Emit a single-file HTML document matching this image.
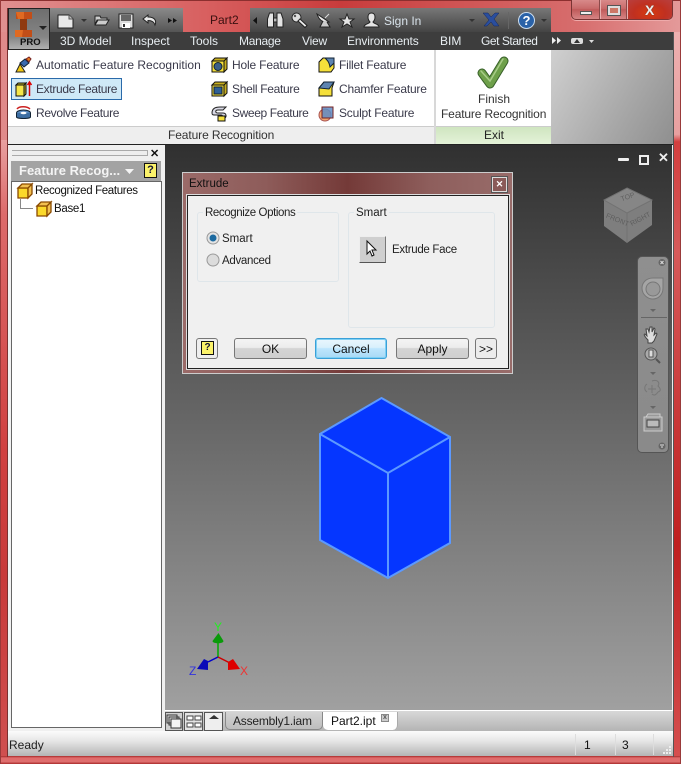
<!DOCTYPE html>
<html><head><meta charset="utf-8"><style>
html,body{margin:0;padding:0}
body{width:681px;height:764px;position:relative;overflow:hidden;font:12px "Liberation Sans",sans-serif;color:#222;background:#c33}
.a{position:absolute}
.t{position:absolute;white-space:nowrap;line-height:16px;height:16px}
.m{color:#e8eef2;top:33px}
.r{color:#3a3a4a}
.d{font-size:11.500px;color:#222}
.btn{position:absolute;top:338px;height:19px;border:1px solid #777;border-radius:3px;background:linear-gradient(#f4f4f4 0,#ececec 45%,#d4d4d4 50%,#cfcfcf 100%);text-align:center;line-height:21px;color:#111}
svg{position:absolute;overflow:visible}
</style></head><body>
<!-- frame -->
<div class="a" style="left:0;top:0;width:681px;height:764px;background:linear-gradient(90deg,#e08a8a 0,#d96a6a 100%)"></div>
<div class="a" style="left:0;top:0;width:681px;height:32px;background:linear-gradient(90deg,#e09090 0,#d86060 30%,#c83c3c 50%,#d76d6d 85%,#e49a9a 100%)"></div>
<div class="a" style="left:0;top:0;width:681px;height:1px;background:#8c2f2f"></div>
<div class="a" style="left:0;top:140px;width:7px;height:624px;background:linear-gradient(#e8a0a0 0,#dc6a6a 12%,#d04040 50%,#c83a3a 70%,#d05050 100%)"></div>
<div class="a" style="left:674px;top:32px;width:7px;height:732px;background:linear-gradient(#eeb0b0 0,#e8a0a0 14%,#d33f3f 15%,#d65a5a 30%,#c02020 70%,#d65050 100%)"></div>
<div class="a" style="left:0;top:756px;width:681px;height:8px;background:linear-gradient(#a82a2a 0,#e06a6a 25%,#e07070 70%,#a82a2a 100%)"></div>
<div class="a" style="left:0;top:0;width:1px;height:764px;background:#9a3a3a"></div>
<div class="a" style="left:680px;top:0;width:1px;height:764px;background:#9a3a3a"></div>
<div class="a" style="left:7px;top:8px;width:1px;height:749px;background:#7a3030"></div>
<div class="a" style="left:673px;top:32px;width:1px;height:725px;background:#555"></div>
<!-- title bar toolbars -->
<div class="a" style="left:49px;top:8px;width:134px;height:24px;background:linear-gradient(#8a8a8a,#555)"></div>
<div class="a" style="left:250px;top:8px;width:301px;height:24px;background:linear-gradient(#777,#444)"></div>
<div class="t" style="left:210px;top:12px;color:#3a1010">Part2</div>
<!-- menubar -->
<div class="a" style="left:8px;top:32px;width:665px;height:18px;background:#3d3d3d"></div>
<!-- QAT icons -->
<svg style="left:57px;top:13px" width="18" height="16"><path d="M1 2h11l4 4v9H1z" fill="#e8e8e8" stroke="#222"/><path d="M12 2v4h4" fill="#bbb" stroke="#555"/></svg>
<svg style="left:81px;top:19px" width="6" height="4"><path d="M0 0h6L3 3z" fill="#333"/></svg>
<svg style="left:94px;top:14px" width="16" height="12"><path d="M1 11V2h5l1 2h6v2H4L1 11l2-5h12l-3 5z" fill="#ccc" stroke="#222"/></svg>
<svg style="left:118px;top:13px" width="16" height="16"><path d="M1 1h14v14H1z" fill="#ddd" stroke="#222"/><path d="M3 2h10v6H3z" fill="#666"/><path d="M4 10h8v5H4z" fill="#fff"/><path d="M5 11h2v3H5z" fill="#333"/></svg>
<svg style="left:142px;top:14px" width="16" height="12"><path d="M6 1L1 5l5 4V6.500c3 0 6 1 7 4.500 2-5-1-8-7-8z" fill="#e8e8e8" stroke="#222"/></svg>
<svg style="left:168px;top:18px" width="9" height="5"><path d="M0 0l4 2.500L0 5zM5 0l4 2.500L5 5z" fill="#111"/></svg>
<!-- right toolbar icons -->
<svg style="left:253px;top:17px" width="4" height="7"><path d="M4 0v7L0 3.500z" fill="#111"/></svg>
<svg style="left:267px;top:12px" width="17" height="16"><path d="M2.500 1h4v14H0.500V7zM10 1h4l2 6v8h-6z" fill="#e4e4e4" stroke="#222"/><path d="M6.500 6h3.500v4H6.500z" fill="#bbb" stroke="#222"/></svg>
<svg style="left:291px;top:12px" width="17" height="16"><circle cx="5.500" cy="5.500" r="4.500" fill="#ddd" stroke="#222"/><circle cx="4" cy="4" r="1.200" fill="#555"/><path d="M9 7l7 6.500-2 2-7-6.500z" fill="#eee" stroke="#222"/></svg>
<svg style="left:316px;top:12px" width="17" height="16"><path d="M1 2c2 6 6 9 12 8z" fill="#e8e8e8" stroke="#222"/><path d="M7 9l-3 6h10l-3-5" fill="#ccc" stroke="#222"/><path d="M9 6l4-4" stroke="#ddd"/></svg>
<svg style="left:339px;top:13px" width="16" height="15"><path d="M8 1l2 5h5l-4 3 2 5-5-3-5 3 2-5-4-3h5z" fill="#e4e4e4" stroke="#222"/></svg>
<svg style="left:363px;top:12px" width="17" height="16"><path d="M8.500 1c2.500 0 3.500 2 3.500 4s-1 4-2 5c1 2 6 2 6 5H1c0-3 5-3 6-5-1-1-2-3-2-5s1-4 3.500-4z" fill="#e4e4e4" stroke="#222"/></svg>
<div class="t" style="left:384px;top:13px;color:#d8e2ea">Sign In</div>
<svg style="left:469px;top:19px" width="6" height="4"><path d="M0 0h6L3 3z" fill="#333"/></svg>
<svg style="left:483px;top:12px" width="17" height="15"><path d="M0 1h5l3 4 4-4h4l-5 6 5 7h-5L8 10l-4 4H1l5-6z" fill="#2a4e9e" stroke="#14255a" stroke-width=".5"/></svg>
<div class="a" style="left:508px;top:12px;width:1px;height:17px;background:#666"></div>
<div class="a" style="left:518px;top:12px;width:15px;height:15px;border-radius:50%;background:#2a62a8;border:1px solid #cde;color:#fff;font:bold 13px/15px 'Liberation Sans',sans-serif;text-align:center">?</div>
<svg style="left:541px;top:19px" width="6" height="4"><path d="M0 0h6L3 3z" fill="#333"/></svg>
<!-- window controls -->
<div class="a" style="left:571px;top:0;width:102px;height:20px;border:1px solid #7a3434;border-top:0;border-radius:0 0 5px 5px;box-sizing:border-box;background:linear-gradient(#d88a8a 0,#c86a6a 45%,#c05a5a 50%,#d68484 100%);box-shadow:0 1px 0 #eaa"></div>
<div class="a" style="left:627px;top:0;width:45px;height:19px;border-radius:0 0 4px 0;background:radial-gradient(ellipse at 50% 70%,#d83a10 0,#c03020 50%,#b84040 100%)"></div>
<div class="a" style="left:599px;top:0;width:1px;height:19px;background:#8a4a4a;box-shadow:1px 0 0 #e8b0b0"></div>
<div class="a" style="left:626px;top:0;width:1px;height:19px;background:#8a4a4a;box-shadow:1px 0 0 #e8b0b0"></div>
<div class="a" style="left:580px;top:11px;width:10px;height:2px;background:#eee;border:1px solid #555"></div>
<div class="a" style="left:608px;top:6px;width:8px;height:5px;border:2px solid #ddd;outline:1px solid #555;background:#c76"></div>
<div class="t" style="left:645px;top:2px;color:#eee;font:bold 14px/16px 'Liberation Sans',sans-serif;text-shadow:0 0 1px #333">X</div>
<!-- app button -->
<div class="a" style="left:8px;top:8px;width:40px;height:40px;border:1px solid #222;background:linear-gradient(#6e6e6e 0,#858585 70%,#b0b0b0 100%)"></div>
<svg style="left:15px;top:12px" width="18" height="26"><path d="M1 0h16v7h-5v11h5v7H0v-7h5V7H1z" fill="#c24e18"/><path d="M5 7h7v11H5z" fill="#8f3a10"/><path d="M1 0h8v7H3zM0 18h8l-1 7H0z" fill="#e06a22"/></svg>
<svg style="left:39px;top:26px" width="8" height="5"><path d="M0 0h8L4 4z" fill="#222"/></svg>
<div class="t" style="left:20px;top:36px;font:bold 9.500px/13px 'Liberation Sans',sans-serif;color:#111">PRO</div>
<!-- menu text -->
<div class="t m" style="left:60px">3D Model</div>
<div class="t m" style="left:131px">Inspect</div>
<div class="t m" style="left:190px">Tools</div>
<div class="t m" style="left:239px;letter-spacing:-.3px">Manage</div>
<div class="t m" style="left:302px;letter-spacing:-.2px">View</div>
<div class="t m" style="left:347px;letter-spacing:-.15px">Environments</div>
<div class="t m" style="left:440px">BIM</div>
<div class="t m" style="left:481px;letter-spacing:-.45px">Get Started</div>
<svg style="left:552px;top:37px" width="9" height="7"><path d="M0 0l4 3.500L0 7zM5 0l4 3.500L5 7z" fill="#eee"/></svg>
<div class="a" style="left:571px;top:38px;width:12px;height:6px;border-radius:2px;background:#ddd"></div>
<svg style="left:574px;top:39px" width="6" height="4"><path d="M0 4h6L3 0z" fill="#333"/></svg>
<svg style="left:589px;top:40px" width="5" height="3"><path d="M0 0h5L2.500 3z" fill="#ddd"/></svg>
<!-- ribbon -->
<div class="a" style="left:8px;top:50px;width:426px;height:76px;background:#fff"></div>
<div class="a" style="left:8px;top:126px;width:426px;height:1px;background:#ccc"></div>
<div class="a" style="left:8px;top:127px;width:426px;height:17px;background:#eee"></div>
<div class="a" style="left:434px;top:50px;width:2px;height:94px;background:#d8d8d8"></div>
<div class="a" style="left:436px;top:50px;width:115px;height:76px;background:#fff"></div>
<div class="a" style="left:436px;top:126px;width:115px;height:18px;background:linear-gradient(#cfe5c0,#e4f2d8);border-top:1px solid #ccc;box-sizing:border-box"></div>
<div class="a" style="left:551px;top:50px;width:122px;height:94px;background:linear-gradient(120deg,#d0d0d0 0,#a8a8a8 60%,#8f8f8f 100%)"></div>
<div class="a" style="left:11px;top:78px;width:109px;height:20px;background:#cfe9f7;border:1px solid #2a6aaa"></div>
<div class="t r" style="left:36px;top:57px">Automatic Feature Recognition</div>
<div class="t r" style="left:36px;top:81px;letter-spacing:-.33px">Extrude Feature</div>
<div class="t r" style="left:36px;top:105px;letter-spacing:-.33px">Revolve Feature</div>
<div class="t r" style="left:232px;top:57px;letter-spacing:-.17px">Hole Feature</div>
<div class="t r" style="left:232px;top:81px;letter-spacing:-.3px">Shell Feature</div>
<div class="t r" style="left:232px;top:105px;letter-spacing:-.38px">Sweep Feature</div>
<div class="t r" style="left:339px;top:57px;letter-spacing:-.2px">Fillet Feature</div>
<div class="t r" style="left:339px;top:81px;letter-spacing:-.2px">Chamfer Feature</div>
<div class="t r" style="left:339px;top:105px;letter-spacing:-.2px">Sculpt Feature</div>
<div class="t" style="left:168px;top:127px;color:#333;letter-spacing:-.1px">Feature Recognition</div>
<div class="t" style="left:484px;top:127px;color:#222">Exit</div>
<div class="t" style="left:478px;top:91px;color:#333">Finish</div>
<div class="t" style="left:441px;top:106px;color:#333;letter-spacing:-.15px">Feature Recognition</div>
<!-- ribbon icons -->
<svg style="left:15px;top:56px" width="17" height="17"><path d="M1 16l4-8 5 8z" fill="#f2c811" stroke="#222"/><path d="M5 7l5-4 4 4-5 4z" fill="#3a6ab0" stroke="#123"/><path d="M11 3l3-2 2 2-2 3z" fill="#e87b1e" stroke="#722"/></svg>
<svg style="left:15px;top:80px" width="17" height="17"><path d="M1 5h8v11H1z" fill="#f6e64a" stroke="#111"/><path d="M1 5l2-2h8L9 5zM9 5l2-2v11l-2 2z" fill="#c0b020" stroke="#111"/><path d="M14.500 16V3M12.500 5l2-3 2 3" stroke="#d00" fill="none" stroke-width="1.500"/></svg>
<svg style="left:15px;top:104px" width="17" height="17"><path d="M2 5c2-3 10-3 13 0" stroke="#c22" fill="none" stroke-width="1.500"/><ellipse cx="8.500" cy="9" rx="7" ry="3" fill="#5b8bc0" stroke="#123"/><path d="M1.500 9v4c0 2 14 2 14 0V9" fill="#3d6ea3" stroke="#123"/><ellipse cx="8.500" cy="9" rx="3" ry="1.200" fill="#fff"/></svg>
<svg style="left:211px;top:57px" width="17" height="16"><path d="M1 4h12v11H1z" fill="#f5e03a" stroke="#111"/><path d="M1 4l3-3h12l-3 3zM13 4l3-3v11l-3 3z" fill="#c9b020" stroke="#111"/><circle cx="7" cy="9.500" r="4" fill="#3b5f88" stroke="#123"/></svg>
<svg style="left:211px;top:81px" width="17" height="16"><path d="M1 4h12v11H1z" fill="#f5e03a" stroke="#111"/><path d="M1 4l3-3h12l-3 3zM13 4l3-3v11l-3 3z" fill="#c9b020" stroke="#111"/><path d="M3 6h8v7H3z" fill="#2e5f96" stroke="#123"/></svg>
<svg style="left:211px;top:105px" width="19" height="17"><path d="M1 8c0-5 4-6 8-6h6l-3 3H7c-3 0-3 3 0 3h5c3 0 4 3 2 5l-3-2c1 0 0-1-1-1H5C2 10 1 10 1 8z" fill="#d8d8e4" stroke="#222"/><path d="M7 11h7v5H7z" fill="#f5e03a" stroke="#111"/></svg>
<svg style="left:318px;top:57px" width="17" height="16"><path d="M1 5l4-4h11v10l-3 4H1z" fill="#f5e03a" stroke="#111"/><path d="M7 1h9v5l-4 4c-1-5-2-6-5-9z" fill="#5d84b0" stroke="#123"/></svg>
<svg style="left:318px;top:81px" width="17" height="16"><path d="M1 7l5-6h10l-2 6v8H1z" fill="#f5e03a" stroke="#111"/><path d="M1 7l5-6h10l-5 7z" fill="#5d84b0" stroke="#123"/></svg>
<svg style="left:318px;top:105px" width="17" height="17"><circle cx="7" cy="10" r="6" fill="#f0a870" stroke="#a55"/><path d="M4 2h11v11H4z" fill="#5f8cc4" fill-opacity=".85" stroke="#722"/></svg>
<svg style="left:474px;top:54px" width="36" height="36"><path d="M8 19l8 11L30 7" fill="none" stroke="#38602a" stroke-width="9" stroke-linecap="round" stroke-linejoin="round"/><path d="M8 19l8 11L30 7" fill="none" stroke="#6ea04a" stroke-width="7" stroke-linecap="round" stroke-linejoin="round"/><path d="M7 17l9 10L29 5" fill="none" stroke="#a8cc88" stroke-width="1.500" stroke-linecap="round"/></svg>
<!-- dark bg -->
<div class="a" style="left:8px;top:144px;width:665px;height:587px;background:#222"></div>
<!-- browser -->
<div class="a" style="left:8px;top:145px;width:157px;height:586px;background:#f0f0f0"></div>
<div class="a" style="left:12px;top:150px;width:135px;height:4px;border:1px solid #aaa;border-width:1px 1px 1px 0;background:#eee"></div>
<div class="t" style="left:150px;top:146px;font:bold 11px/16px 'Liberation Sans',sans-serif;color:#111">✕</div>
<div class="a" style="left:11px;top:161px;width:150px;height:20px;background:#a3a3a3"></div>
<div class="t" style="left:19px;top:163px;font:bold 13px/16px 'Liberation Sans',sans-serif;color:#f4f4f4">Feature Recog...</div>
<svg style="left:125px;top:169px" width="9" height="5"><path d="M0 0h9L4.500 5z" fill="#f4f4f4"/></svg>
<div class="a" style="left:144px;top:163px;width:11px;height:13px;background:#fbf26a;border:1px solid #111;font:bold 11px/13px 'Liberation Sans',sans-serif;text-align:center;color:#113">?</div>
<div class="a" style="left:11px;top:181px;width:149px;height:545px;background:#fff;border:1px solid #666"></div>
<svg style="left:17px;top:183px" width="16" height="16"><path d="M1 5h10v10H1z" fill="#fbd92a" stroke="#8a4a00" stroke-width="1.300"/><path d="M1 5l4-4h10l-4 4zM11 5l4-4v10l-4 4z" fill="#f2c050" stroke="#8a4a00" stroke-width="1.300"/></svg>
<svg style="left:36px;top:201px" width="16" height="16"><path d="M1 5h10v10H1z" fill="#fbd92a" stroke="#8a4a00" stroke-width="1.300"/><path d="M1 5l4-4h10l-4 4zM11 5l4-4v10l-4 4z" fill="#f2c050" stroke="#8a4a00" stroke-width="1.300"/></svg>
<svg style="left:19px;top:199px" width="16" height="11"><path d="M1.500 0v9.500H14" fill="none" stroke="#888"/></svg>
<div class="t" style="left:35px;top:183px;color:#111;font-size:11.500px;letter-spacing:-.35px">Recognized Features</div>
<div class="t" style="left:54px;top:201px;color:#111;font-size:11.500px;letter-spacing:-.3px">Base1</div>
<!-- canvas -->
<div class="a" style="left:165px;top:145px;width:507px;height:565px;background:linear-gradient(#303030 0,#a0a0a0 100%)"></div>
<div class="a" style="left:672px;top:145px;width:1px;height:566px;background:#eee"></div>
<!-- canvas controls -->
<div class="a" style="left:618px;top:158px;width:11px;height:3px;background:#eee;border-radius:1px"></div>
<div class="a" style="left:639px;top:155px;width:6px;height:6px;border:2px solid #eee"></div>
<div class="t" style="left:658px;top:150px;font:bold 13px/16px 'Liberation Sans',sans-serif;color:#eee">✕</div>
<!-- view cube -->
<svg style="left:602px;top:188px" width="52" height="56"><path d="M25 0L50 12 50 37 25 55 2 38 2 12z" fill="#7e7e7e"/><path d="M25 0L50 12 25 25 2 12z" fill="#868686" stroke="#727272"/><path d="M25 25v30" stroke="#727272"/></svg>
<div class="t" style="left:605px;top:216px;font-size:7px;line-height:10px;height:10px;color:#5e5e5e;transform:rotate(22deg)">FRONT</div>
<div class="t" style="left:630px;top:215px;font-size:7px;line-height:10px;height:10px;color:#5e5e5e;transform:rotate(-28deg)">RIGHT</div>
<div class="t" style="left:621px;top:193px;font-size:7px;line-height:10px;height:10px;color:#606060;transform:rotate(-20deg)">TOP</div>
<!-- nav bar -->
<div class="a" style="left:637px;top:256px;width:32px;height:197px;border-radius:5px;background:linear-gradient(#8f8f8f,#8a8a8a);border:1px solid #555;box-sizing:border-box"></div>
<svg style="left:641px;top:261px" width="26" height="188" fill="none"><circle cx="21" cy="1.500" r="3.500" fill="#666"/><path d="M19.500 0l3 3M22.500 0l-3 3" stroke="#ddd"/><path d="M1 27c0-5 4-10 11-10h10v10c0 7-5 11-10 11S1 34 1 27z" fill="#a5a5a5" stroke="#777"/><circle cx="12" cy="28" r="7" stroke="#777" fill="#999"/><path d="M9 48h6l-3 3z" fill="#666"/><path d="M0 56.500h26" stroke="#666"/><path d="M7 79c-3-3-5-6-3-6l2 2-1-7 2 0 1 3 1-5 2 0 0 5 2-4 1 1-1 6 2-2 1 1-3 7-2 2H7z" fill="#ddd" stroke="#444"/><circle cx="10" cy="93" r="6" fill="#aaa" stroke="#555"/><path d="M8 89h4v7H8z" fill="#ddd" stroke="#555"/><path d="M15 98l4 4" stroke="#555" stroke-width="2"/><path d="M9 111h6l-3 3z" fill="#666"/><path d="M6 123c-3 2-3 6 0 8M11 120c6-2 8 2 6 5 3 3 3 5 0 6-2 3-4 4-6 2" stroke="#777"/><path d="M11 124v8M7 128h8" stroke="#777"/><path d="M9 145h6l-3 3z" fill="#666"/><path d="M5 156l2-3h12v3M3 156h18v14H3z" stroke="#ccc" fill="#999"/><path d="M6 159h12v7H6z" fill="#bbb" stroke="#444"/><circle cx="21" cy="185" r="3.500" fill="#666"/><path d="M19 184h4M20 186h2" stroke="#ddd"/></svg>
<!-- part -->
<svg style="left:310px;top:390px" width="150" height="195"><path d="M71.500 8L140 47V153L78 188 10 150V44z" fill="#0536ff" stroke="#5c99ff" stroke-width="2"/><path d="M10 44L78 83 140 47M78 83V188" fill="none" stroke="#5c99ff" stroke-width="2"/></svg>
<!-- triad -->
<svg style="left:187px;top:622px" width="65" height="58"><path d="M31 21V35" stroke="#0a0" stroke-width="1.500"/><path d="M31.500 11l5 8c0 3-11 3-11 0z" fill="#0a9a0a"/><path d="M31 35L21 40" stroke="#00c" stroke-width="1.500"/><path d="M17 37L10 47l11 1 0-9z" fill="#0a0ab8"/><path d="M31 35l12 6" stroke="#c00" stroke-width="1.500"/><path d="M46 37l7 10-12 1 0-8z" fill="#d00"/></svg>
<div class="t" style="left:214px;top:619px;color:#2e2;font-size:12px">Y</div>
<div class="t" style="left:189px;top:663px;color:#33d;font-size:12px">Z</div>
<div class="t" style="left:240px;top:663px;color:#e33;font-size:12px">X</div>
<!-- dialog -->
<div class="a" style="left:182px;top:172px;width:331px;height:202px;border:1px solid #ccc;box-sizing:border-box;background:linear-gradient(90deg,#9a6a68 0,#8e5c5a 25%,#743a38 50%,#8e5e5c 75%,#986c6a 100%)"></div>
<div class="a" style="left:187px;top:195px;width:322px;height:174px;background:#f0f0f0;border:1px solid #222;box-sizing:border-box;outline:1px solid #ddd"></div>
<div class="t" style="left:189px;top:176px;color:#111;font-size:11.500px">Extrude</div>
<div class="a" style="left:492px;top:177px;width:13px;height:13px;background:#8a5a58;border:1px solid #ddd;outline:1px solid #555;color:#fff;font:bold 9px/13px 'Liberation Sans',sans-serif;text-align:center">✕</div>
<div class="a" style="left:197px;top:212px;width:142px;height:70px;border:1px solid #dfe6ea;border-radius:3px;box-sizing:border-box"></div>
<div class="a" style="left:348px;top:212px;width:147px;height:116px;border:1px solid #dfe6ea;border-radius:3px;box-sizing:border-box"></div>
<div class="t d" style="left:203px;top:205px;background:#f0f0f0;padding:0 2px;letter-spacing:-.4px">Recognize Options</div>
<div class="t d" style="left:354px;top:205px;background:#f0f0f0;padding:0 2px">Smart</div>
<svg style="left:207px;top:232px" width="14" height="14"><circle cx="6" cy="6" r="6" fill="#e4e4e4" stroke="#999"/><circle cx="6" cy="6" r="3.500" fill="#1c6aa0"/></svg>
<svg style="left:207px;top:254px" width="14" height="14"><circle cx="6" cy="6" r="6" fill="#dcdcdc" stroke="#999"/></svg>
<div class="t d" style="left:222px;top:231px">Smart</div>
<div class="t d" style="left:222px;top:253px;letter-spacing:-.3px">Advanced</div>
<div class="a" style="left:359px;top:236px;width:25px;height:25px;background:#cfcfcf;border:1px solid #eee;border-right-color:#777;border-bottom-color:#555"></div>
<svg style="left:366px;top:240px" width="12" height="18"><path d="M1 1v13l3-3 2 5 2-1-2-5h4z" fill="#fff" stroke="#111"/></svg>
<div class="t d" style="left:392px;top:242px;letter-spacing:-.3px">Extrude Face</div>
<div class="a" style="left:196px;top:338px;width:20px;height:19px;border:1px solid #777;border-radius:3px;background:#eee"></div>
<div class="a" style="left:201px;top:341px;width:11px;height:12px;background:#fbf26a;border:1px solid #111;font:bold 10px/12px 'Liberation Sans',sans-serif;text-align:center;color:#113">?</div>
<div class="btn" style="left:234px;width:71px">OK</div>
<div class="btn" style="left:315px;width:70px;border-color:#3aa0d8;box-shadow:inset 0 0 0 1px #7fd0f4;background:linear-gradient(#eaf6fd 0,#d9f0fc 45%,#bee6fd 50%,#a7d9f5 100%)">Cancel</div>
<div class="btn" style="left:396px;width:71px">Apply</div>
<div class="btn" style="left:475px;width:20px;background:#ececec">&gt;&gt;</div>
<!-- tab bar -->
<div class="a" style="left:165px;top:710px;width:508px;height:21px;background:linear-gradient(#d8d8d8,#b4b4b4);border-top:1px solid #fff;box-sizing:border-box"></div>
<div class="a" style="left:165px;top:712px;width:18px;height:19px;background:#d0d0d0;border:1px solid #555;box-sizing:border-box"></div>
<div class="a" style="left:184px;top:712px;width:19px;height:19px;background:#e4e4e4;border:1px solid #555;box-sizing:border-box"></div>
<div class="a" style="left:204px;top:712px;width:19px;height:19px;background:#eee;border:1px solid #555;box-sizing:border-box"></div>
<svg style="left:166px;top:714px" width="57" height="17" fill="none" stroke="#333"><path d="M1 1h10v8H1zM3 3h10v8H3z" fill="#ddd"/><path d="M5 5h10v9H5z" fill="#f4f4f4"/><path d="M21 2h6v4h-6zM29 2h6v4h-6zM21 9h6v4h-6zM29 9h6v4h-6z" fill="#fff" stroke="#444"/><path d="M43 5l5-4 5 4z" fill="#333" stroke="none"/></svg>
<div class="a" style="left:225px;top:712px;width:98px;height:18px;background:linear-gradient(#d4d4d4,#bdbdbd);border:1px solid #888;border-top:0;border-radius:0 0 5px 5px;box-sizing:border-box"></div>
<div class="a" style="left:323px;top:712px;width:75px;height:18px;background:#fff;border-radius:0 0 5px 5px;border-right:1px solid #aaa;box-sizing:border-box"></div>
<div class="t" style="left:233px;top:713px;color:#222;letter-spacing:-.2px">Assembly1.iam</div>
<div class="t" style="left:331px;top:713px;color:#111">Part2.ipt</div>
<div class="a" style="left:381px;top:714px;width:6px;height:6px;background:#ccc;border:1px solid #888;font:bold 7px/6px 'Liberation Sans',sans-serif;text-align:center;color:#555">x</div>
<!-- status -->
<div class="a" style="left:8px;top:731px;width:665px;height:25px;background:linear-gradient(#fbfbfb 0,#e6e6e6 40%,#b4b4b4 100%)"></div>
<div class="a" style="left:575px;top:734px;width:1px;height:21px;background:#ddd"></div>
<div class="a" style="left:615px;top:734px;width:1px;height:21px;background:#ddd"></div>
<div class="a" style="left:653px;top:734px;width:1px;height:21px;background:#ddd"></div>
<div class="t" style="left:9px;top:737px;color:#222">Ready</div>
<div class="t" style="left:584px;top:737px;color:#111">1</div>
<div class="t" style="left:622px;top:737px;color:#111">3</div>
<svg style="left:663px;top:746px" width="9" height="8"><path d="M6 0h2v2H6zM3 3h2v2H3zM6 3h2v2H6zM0 6h2v2H0zM3 6h2v2H3zM6 6h2v2H6z" fill="#eee"/></svg>
</body></html>
